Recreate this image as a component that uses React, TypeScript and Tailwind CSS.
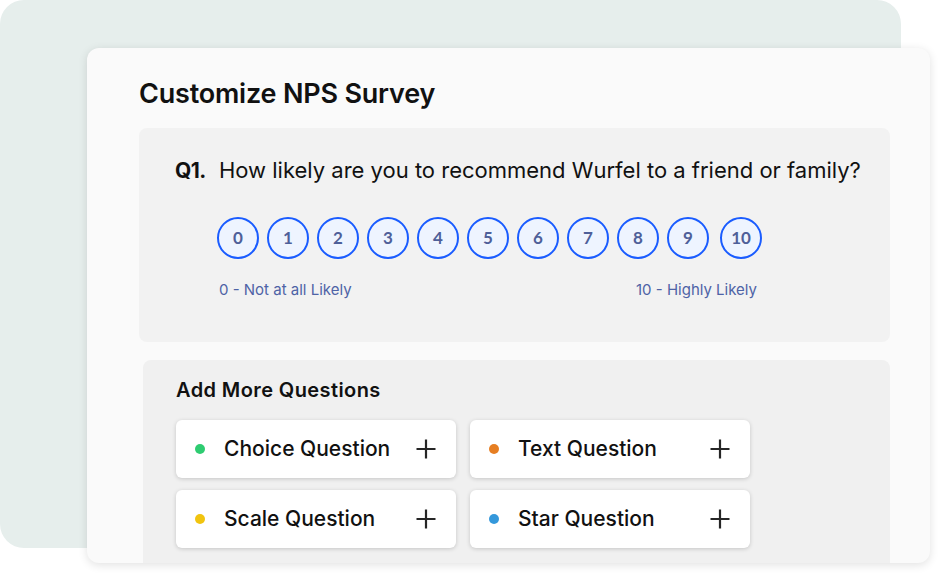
import React from "react";

const scores = [0, 1, 2, 3, 4, 5, 6, 7, 8, 9, 10];

const questionTypes = [
  { label: "Choice Question", dot: "bg-[#2ecc71]" },
  { label: "Text Question", dot: "bg-[#e67e22]" },
  { label: "Scale Question", dot: "bg-[#f1c40f]" },
  { label: "Star Question", dot: "bg-[#3498db]" },
];

function PlusIcon() {
  return (
    <svg width="22" height="22" viewBox="0 0 22 22" fill="none" stroke="#262626" strokeWidth="2.2">
      <path d="M11 1.5v19M1.5 11h19" />
    </svg>
  );
}

export default function App() {
  return (
    <div className="relative w-[943px] h-[578px] bg-white overflow-hidden font-['Inter',sans-serif]">
      {/* back panel */}
      <div className="absolute left-0 top-0 w-[901px] h-[548px] rounded-[24px] bg-[#e6eeec]" />

      {/* main card */}
      <div className="absolute left-[87px] top-[48px] w-[843px] h-[515px] rounded-[12px] bg-[#fafafa] shadow-[0_2px_10px_rgba(0,0,0,0.12)] overflow-hidden pl-[52px] pr-[40px] pt-[28px]">
        <h1 className="text-[27px] font-semibold tracking-[-0.2px] text-[#111] leading-[36px]">Customize NPS Survey</h1>

        <div className="mt-[16px] h-[214px] rounded-[8px] bg-[#f2f2f2] pl-[36px] pt-[26px]">
          <div className="flex items-baseline gap-[14px] text-[22px] leading-[32px] text-[#111]">
            <span className="font-bold text-[21px] tracking-[-0.5px]">Q1.</span>
            <span className="-ml-[1px]">How likely are you to recommend Wurfel to a friend or family?</span>
          </div>

          <div className="mt-[30px] ml-[42px] flex gap-[8px]">
            {scores.map((n) => (
              <div
                key={n}
                className={`w-[42px] h-[42px] rounded-full border-2 border-[#1a5cff] bg-[#eef4ff] flex items-center justify-center text-[17px] font-bold text-[#4e5f99] font-['Lato',sans-serif] ${n === 10 ? "ml-[3px]" : ""}`}
              >
                {n}
              </div>
            ))}
          </div>

          <div className="mt-[20px] ml-[44px] w-[538px] flex justify-between text-[15px] text-[#4e63a6]">
            <span>0 - Not at all Likely</span>
            <span>10 - Highly Likely</span>
          </div>
        </div>

        <div className="mt-[18px] ml-[4px] h-[220px] rounded-t-[8px] bg-[#f0f0f0] pl-[33px] pt-[15px]">
          <h2 className="text-[20px] font-semibold tracking-[0.4px] text-[#111] leading-[30px]">Add More Questions</h2>
          <div className="mt-[15px] grid grid-cols-[280px_280px] gap-x-[14px] gap-y-[12px]">
            {questionTypes.map((q) => (
              <button
                key={q.label}
                className="h-[58px] rounded-[6px] bg-white shadow-[0_1px_4px_rgba(0,0,0,0.18)] flex items-center pl-[19px] pr-[19px]"
              >
                <span className={`w-[10px] h-[10px] rounded-full ${q.dot}`} />
                <span className="ml-[19px] text-[21px] font-medium text-[#111]">{q.label}</span>
                <span className="ml-auto">
                  <PlusIcon />
                </span>
              </button>
            ))}
          </div>
        </div>
      </div>
    </div>
  );
}
